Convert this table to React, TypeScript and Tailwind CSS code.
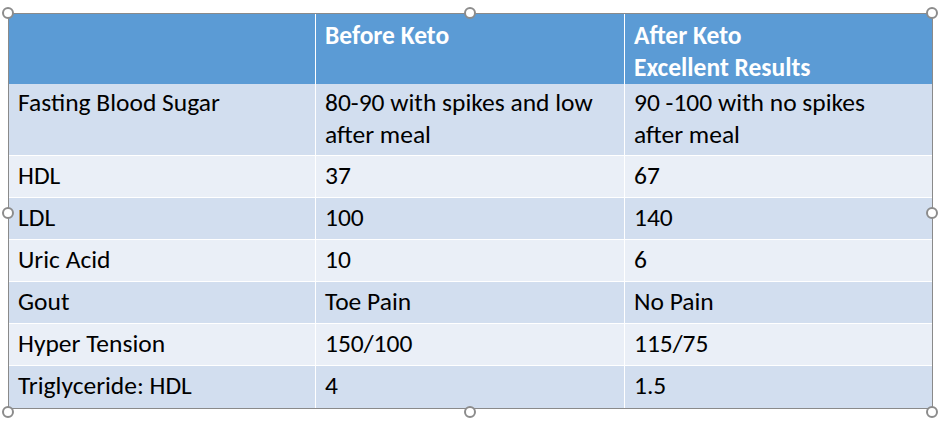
const ROWS: [string, React.ReactNode, React.ReactNode][] = [
  [
    "Fasting Blood Sugar",
    <>80-90 with spikes and low<br />after meal</>,
    <>90 -100 with no spikes<br />after meal</>,
  ],
  ["HDL", "37", "67"],
  ["LDL", "100", "140"],
  ["Uric Acid", "10", "6"],
  ["Gout", "Toe Pain", "No Pain"],
  ["Hyper Tension", "150/100", "115/75"],
  ["Triglyceride: HDL", "4", "1.5"],
];

// selection handle centres round the table frame
const HANDLES = [
  "left-[2px] top-[7px]",
  "left-[464px] top-[7px]",
  "left-[926px] top-[7px]",
  "left-[2px] top-[207px]",
  "left-[926px] top-[207px]",
  "left-[2px] top-[406px]",
  "left-[464px] top-[406px]",
  "left-[926px] top-[406px]",
];

function Cell({ children, className = "" }: { children?: React.ReactNode; className?: string }) {
  return <div className={`pl-[9px] pr-[6px] leading-[32px] whitespace-nowrap ${className}`}>{children}</div>;
}

export default function App() {
  return (
    <div
      className="relative w-[942px] h-[433px] bg-white overflow-hidden pl-[8px] pt-[13px] text-[25.5px] text-black"
      style={{ fontFamily: "Carlito, Calibri, Lato, sans-serif" }}
    >
      <div className="w-[925px] border border-[#8a8a8a] bg-white flex flex-col">
        {/* header */}
        <div className="grid grid-cols-[306px_308px_307px] gap-x-px h-[70px] border-b-[3px] border-white">
          <Cell className="bg-[#5b9bd5] pt-[6px]" />
          <Cell className="bg-[#5b9bd5] pt-[6px] font-bold text-white">Before Keto</Cell>
          <Cell className="bg-[#5b9bd5] pt-[6px] font-bold text-white">
            After Keto
            <br />
            Excellent Results
          </Cell>
        </div>

        {ROWS.map((row, i) => {
          const bg = i % 2 === 0 ? "bg-[#d2deef]" : "bg-[#eaeff7]";
          const h = i === 0 ? "h-[71px]" : i === ROWS.length - 1 ? "h-[42px] mt-px" : "h-[41px] mt-px";
          return (
            <div key={row[0]} className={`grid grid-cols-[306px_308px_307px] gap-x-px ${h}`}>
              {row.map((text, j) => (
                <Cell key={j} className={`${bg} ${i === 0 ? "pt-[3px]" : "pt-[4px]"}`}>
                  {text}
                </Cell>
              ))}
            </div>
          );
        })}
      </div>

      {HANDLES.map((pos) => (
        <div
          key={pos}
          className={`absolute ${pos} w-[12px] h-[12px] rounded-full bg-white border-2 border-[#8c8c8c]`}
        />
      ))}
    </div>
  );
}
